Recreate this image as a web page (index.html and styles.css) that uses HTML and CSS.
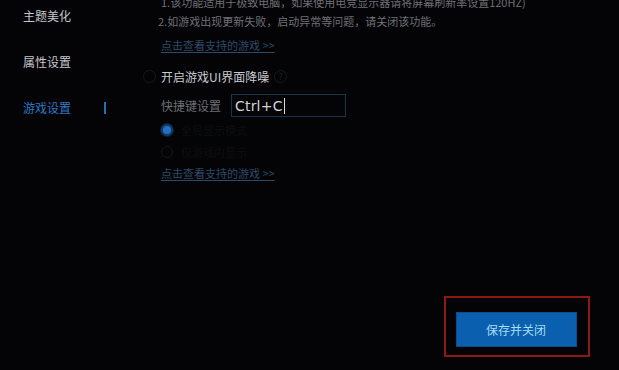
FILE: index.html
```html
<!DOCTYPE html>
<html lang="zh">
<head>
<meta charset="utf-8">
<link rel="stylesheet" href="styles.css">
</head>
<body>
<div class="page">
  <div class="main">
    <nav class="sidebar">
      <div class="nav-item">主题美化</div>
      <div class="nav-item">属性设置</div>
      <div class="nav-item active">游戏设置<span class="marker"></span></div>
    </nav>
    <section class="content">
      <div class="note note1">1.该功能适用于极致电脑，如果使用电竞显示器请将屏幕刷新率设置120HZ)</div>
      <div class="note note2">2.如游戏出现更新失败，启动异常等问题，请关闭该功能。</div>
      <a class="link link1">点击查看支持的游戏 &gt;&gt;</a>
      <div class="check-row">
        <span class="checkbox"></span>
        <span class="check-label">开启游戏UI界面降噪</span>
        <span class="help">?</span>
      </div>
      <div class="shortcut-row">
        <span class="shortcut-label">快捷键设置</span>
        <div class="input"><span class="input-text">Ctrl+C</span><span class="caret"></span></div>
      </div>
      <div class="radio-row first"><span class="radio checked"></span><span class="radio-label">全局显示模式</span></div>
      <div class="radio-row"><span class="radio"></span><span class="radio-label">仅游戏内显示</span></div>
      <a class="link link2">点击查看支持的游戏 &gt;&gt;</a>
    </section>
  </div>
  <footer class="footer">
    <div class="frame">
      <button class="save">保存并关闭</button>
    </div>
  </footer>
</div>
</body>
</html>
```

FILE: styles.css
```css
* { box-sizing: border-box; }
html, body {
  margin: 0;
  padding: 0;
  background: #040407;
  font-family: "Noto Sans CJK SC", "Noto Sans", sans-serif;
  font-size: 12px;
  overflow: hidden;
}
.page {
  width: 619px;
  height: 370px;
  display: flex;
  flex-direction: column;
  background: #040407;
}
.main {
  display: flex;
  flex: 1;
}
.sidebar {
  width: 143px;
  display: flex;
  flex-direction: column;
  padding-top: 6px;
  padding-left: 23px;
  gap: 26px;
}
.nav-item {
  color: #c4c6c9;
  font-size: 12px;
  line-height: 20px;
  display: flex;
  align-items: center;
}
.nav-item.active {
  color: #2f79c2;
}
.marker {
  display: inline-block;
  width: 2px;
  height: 12px;
  background: #2d6bb0;
  margin-left: 33px;
}
.content {
  display: flex;
  flex-direction: column;
  margin-top: -7px;
  padding-left: 18px;
}
.note {
  color: #6f7074;
  font-size: 11px;
  line-height: 18px;
  white-space: nowrap;
}
.note2 { margin-left: -3px; margin-top: 1px; }
.link {
  color: #2c4a68;
  font-size: 11px;
  text-decoration: underline;
  text-underline-offset: 2px;
  line-height: 18px;
}
.link1 { margin-top: 6px; }
.check-row {
  display: flex;
  align-items: center;
  margin-top: 13px;
  margin-left: -18px;
  height: 18px;
}
.checkbox {
  width: 13px;
  height: 13px;
  border-radius: 50%;
  border: 1px solid #16181c;
  margin-right: 5px;
}
.check-label {
  color: #c9cbce;
  font-size: 12px;
}
.help {
  width: 13px;
  height: 13px;
  border-radius: 50%;
  border: 1px solid #15191f;
  color: #1a1f26;
  font-size: 9px;
  line-height: 11px;
  text-align: center;
  margin-left: 5px;
}
.shortcut-row {
  display: flex;
  align-items: center;
  margin-top: 9px;
}
.shortcut-label {
  color: #6d6f73;
  font-size: 12px;
  width: 70px;
}
.input {
  width: 115px;
  height: 23px;
  border: 1px solid #1d3447;
  display: flex;
  align-items: center;
  padding-left: 3px;
}
.input-text {
  color: #d2d4d6;
  font-family: "DejaVu Sans", sans-serif;
  font-size: 14px;
  letter-spacing: 0.2px;
}
.caret {
  width: 1px;
  height: 16px;
  background: #d8dadc;
  margin-left: 1px;
}
.radio-row {
  display: flex;
  align-items: center;
  height: 22px;
}
.radio-row.first { margin-top: 2px; }
.radio {
  width: 12px;
  height: 12px;
  border-radius: 50%;
  border: 1px solid #14171b;
  margin-right: 8px;
}
.radio.checked {
  border: 2px solid #163a66;
  background: #2270c4;
  box-shadow: 0 0 0 1px #0c1f36;
}
.radio-label {
  color: #0c0e11;
  font-size: 11px;
}
.link2 { margin-top: 1px; }
.footer {
  display: flex;
  justify-content: flex-end;
  padding-right: 29px;
  padding-bottom: 13px;
}
.frame {
  width: 146px;
  height: 61px;
  border: 2px solid #8e1717;
  display: flex;
  justify-content: center;
  align-items: center;
  padding-top: 6px;
  padding-right: 2px;
}
.save {
  width: 121px;
  height: 35px;
  background: #0a5fae;
  border: 1px solid #0b4c8a;
  color: #a6def2;
  font-family: "Noto Sans CJK SC", sans-serif;
  font-size: 12px;
  padding: 0;
}
```
